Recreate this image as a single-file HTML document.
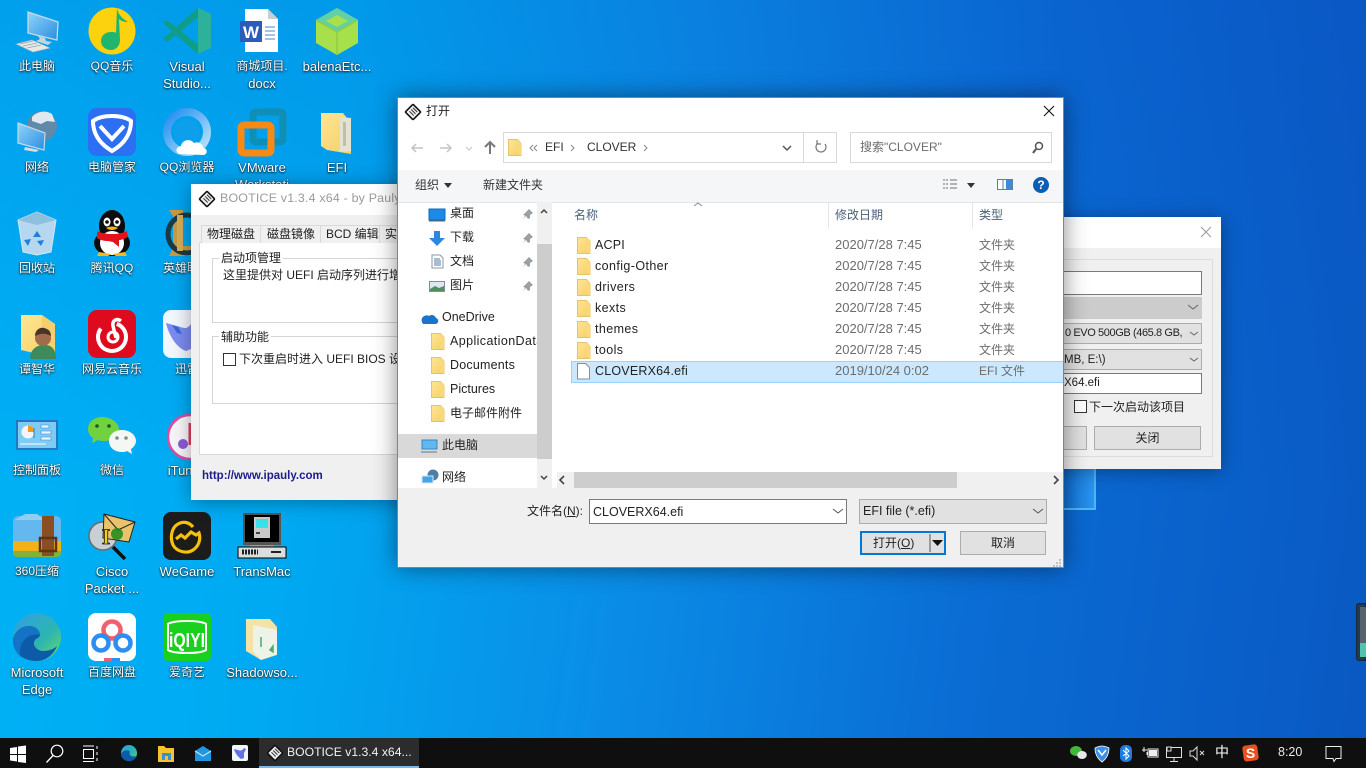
<!DOCTYPE html>
<html><head><meta charset="utf-8"><title>BOOTICE</title>
<style>
*{box-sizing:border-box}
html,body{margin:0;padding:0;width:1366px;height:768px;overflow:hidden}
body{position:relative;font-family:"Liberation Sans","Noto Sans CJK SC",sans-serif;font-size:12px;color:#222;
background:linear-gradient(to bottom,rgba(8,50,180,.14),rgba(8,50,180,0) 65%),linear-gradient(98deg,#00b2f6 0%,#00aaf2 24%,#0a8ce6 48%,#0a6cd4 72%,#0a58c2 100%)}
div{position:absolute}
.t{white-space:nowrap;line-height:16px;height:16px}
.l{width:80px;margin-left:-40px;text-align:center;color:#fff;line-height:17px;white-space:nowrap;text-shadow:0 1px 2px rgba(0,0,0,.9),0 0 1px rgba(0,0,0,.7);font-size:12px}
.e{font-size:13px}
.w{background:#f0f0f0;box-shadow:0 2px 18px rgba(0,0,0,.35)}
.b{border:1px solid #adadad;background:#e1e1e1}
.i{border:1px solid #7a7a7a;background:#fff}
.g{color:#6d6d6d;font-size:13px}
.k{color:#6d6d6d}
.n{font-size:12.5px;color:#222;letter-spacing:.2px}
.h{color:#4c607a}
svg{position:absolute;left:0;top:0;overflow:visible}
</style></head><body>

<div style="left:1064px;top:468px;width:32px;height:42px;background:linear-gradient(90deg,#0f6fd6,#2a96ee);border-right:2px solid #4fb6f4;border-bottom:2px solid #4fb6f4"></div>
<div style="left:1356px;top:603px;width:10px;height:58px;background:#26384e;border:1px solid #16283c;border-radius:3px 0 0 3px"></div>
<div style="left:1360px;top:607px;width:6px;height:36px;background:#56636f"></div>
<div style="left:1360px;top:643px;width:6px;height:14px;background:#4fc4b0"></div>

<svg width="1366" height="768" viewBox="0 0 1366 768">
<defs>
<linearGradient id="sc" x1="0" y1="0" x2="1" y2="1"><stop offset="0" stop-color="#8fd6fa"/><stop offset="1" stop-color="#2c8ce0"/></linearGradient>
<linearGradient id="fo" x1="0" y1="0" x2="1" y2="1"><stop offset="0" stop-color="#ffe593"/><stop offset="1" stop-color="#f5cf66"/></linearGradient>
<linearGradient id="ed" x1="0" y1="0" x2="1" y2="1"><stop offset="0" stop-color="#2f9fe6"/><stop offset=".6" stop-color="#2cb6b0"/><stop offset="1" stop-color="#6edc62"/></linearGradient>
<linearGradient id="qb" x1="0" y1="0" x2="1" y2="1"><stop offset="0" stop-color="#1f8cf0"/><stop offset="1" stop-color="#bfe6fb"/></linearGradient>
<symbol id="f" viewBox="0 0 14 17" overflow="visible"><path d="M.5.5h9l3.5 4v12H.5z" fill="url(#fo)" stroke="#e3c46c"/><path d="M9.500.5l3.500 4v12l-3.500-2z" fill="#f9d97c"/></symbol>
<symbol id="bi" viewBox="0 0 16 16" overflow="visible"><g transform="rotate(45 8 8)"><rect x="2.500" y="2.500" width="11" height="11" rx="1" fill="#eee" stroke="#111" stroke-width="1.600"/><path d="M5 5h6M5 7.500h6M5 10h6" stroke="#333"/></g></symbol>
</defs>

<!-- row 1 -->
<path d="M28 12L58 22 57 40 28 33z" fill="url(#sc)" stroke="#c9d8e4" stroke-width="1.300"/>
<path d="M38 36l7 2 1 3 6 1-4 3-12-4 4-2z" fill="#c5d4df"/>
<path d="M16 44l16-4 18 8-17 4z" fill="#e4e8ea" stroke="#a8b4bc" stroke-width=".6"/>
<path d="M20 44l13-3M23 46l14-3M27 48l14-3" stroke="#9aa6ae" stroke-width=".8"/>

<circle cx="112" cy="31" r="23.500" fill="#fcd20e"/>
<path d="M117 8c1 7 6 11 11 14-4 0-7-1-9-3l1 21c0 6-4 10-9 10-6 0-10-4-10-9s4-9 10-9c2 0 4 0 5 1z" fill="#1fb56e"/>

<path d="M198 8l13 6v34l-13 6z" fill="#2cb29a"/>
<path d="M198 8L176 27l-9-7-4 3 9 8-9 8 4 3 9-7 22 19V45L181 31l17-14z" fill="#0e9d88"/>

<path d="M245 9h23l10 10v33h-33z" fill="#fff"/><path d="M268 9v10h10z" fill="#c9ced4"/>
<rect x="240" y="21" width="22" height="21" fill="#2b5cb8"/>
<text x="251" y="38" fill="#fff" font-size="17" font-weight="bold" text-anchor="middle" font-family="Liberation Sans">W</text>
<path d="M265 27h10M265 31h10M265 35h10M265 39h10" stroke="#4a86d0"/>

<path d="M337 8l21 12v23l-21 12-21-12V20z" fill="#a8e04c"/>
<path d="M337 8l21 12-21 12-21-12z" fill="#62cfa4"/>
<path d="M337 15l11 6-11 6-11-6z" fill="#a8e04c"/>
<path d="M337 32v23M316 20l21 12 21-12" stroke="#8fcc44" stroke-width="1.500" fill="none"/>

<!-- row 2 -->
<circle cx="42" cy="126" r="15" fill="#5f8aaa"/><path d="M32 117c5-6 14-7 20-3l3 8-8-1-6 3-9-3z" fill="#dfe9ef"/>
<path d="M18 123l27 10-1 17-26-7z" fill="url(#sc)" stroke="#c9d8e4" stroke-width="1.200"/>
<path d="M25 147l14 3-3 2-12-2z" fill="#d5dde2"/>

<rect x="88" y="108" width="48" height="48" rx="9" fill="#2c6ff2"/>
<path d="M112 116c8 0 15 2 19 5 0 13-7 23-19 30-12-7-19-17-19-30 4-3 11-5 19-5z" fill="none" stroke="#fff" stroke-width="4"/>
<path d="M100 126l12 13 12-13" fill="none" stroke="#fff" stroke-width="4"/>

<circle cx="187" cy="132" r="20" fill="none" stroke="url(#qb)" stroke-width="8"/>
<circle cx="187" cy="132" r="13" fill="#0e9fec"/>
<path d="M178 154c-6 0-6-7 0-8 1-6 9-8 13-3 5-2 9 1 9 5 5 0 5 7 0 7z" fill="#fff" transform="translate(3 0)"/>

<rect x="253" y="112" width="30" height="30" fill="none" stroke="#128cab" stroke-width="7" rx="3" opacity=".85"/>
<rect x="241" y="125" width="30" height="28" fill="none" stroke="#f78a14" stroke-width="7" rx="3"/>

<path d="M321 113h22l8 10v31l-24-4-6-4z" fill="url(#fo)"/><path d="M340 117l11 1v33l-11 1z" fill="#e4e2d2"/><path d="M343 122h3v24h-3z" fill="#c0bfa8"/>

<!-- row 3 -->
<path d="M18 220l19-8 19 8-5 32-14 3-14-3z" fill="#c9def0" opacity=".9" stroke="#e6f1f8"/>
<path d="M18 220l19-8 19 8-19 5z" fill="#8ec0de"/>
<path d="M37 231l4 6h-8zM44 240l-3 6-4-5zM28 246l-4-6 7-1z" fill="#1f7fda"/>

<ellipse cx="112" cy="226" rx="13" ry="16" fill="#0c0c0c"/>
<ellipse cx="112" cy="243" rx="18" ry="13" fill="#0c0c0c"/>
<ellipse cx="112" cy="243" rx="12" ry="12" fill="#fff"/>
<path d="M97 231c8 4 22 4 30 0l1 6c-4 2-7 3-9 3v7l-6-5-5-1c-4 0-8-1-11-3z" fill="#e1141c"/>
<ellipse cx="107" cy="222" rx="3.500" ry="4.500" fill="#fff"/><ellipse cx="117" cy="222" rx="3.500" ry="4.500" fill="#fff"/>
<circle cx="107" cy="222" r="1.800" fill="#000"/><circle cx="117" cy="222" r="1.800" fill="#000"/>
<path d="M106 228q6-3 12 0-6 4-12 0z" fill="#f6b916"/>
<path d="M99 252l12 2-3 2H97zM125 252l-12 2 3 2h11z" fill="#f6b916"/>

<path d="M169 210h14v6h-3v30h11v10h-22l4-8v-32z" fill="#c79b45"/>
<circle cx="187" cy="234" r="19" fill="none" stroke="#1c3a44" stroke-width="5"/>
<rect x="177" y="215" width="6" height="36" fill="#d7ad57"/>

<!-- row 4 -->
<path d="M21 315h21l13 9v34l-34-8z" fill="url(#fo)"/><path d="M42 315l13 9v20H42z" fill="#f5cf6e"/>
<path d="M30 359c0-10 7-13 11-14h6c5 1 9 5 9 14z" fill="#3e8a5b"/><circle cx="43" cy="338" r="8" fill="#a06c4c"/><path d="M35 336c0-6 5-9 9-8 5 1 7 4 7 8-5-3-10-3-16 0z" fill="#4a3428"/>

<rect x="88" y="310" width="48" height="48" rx="9" fill="#de0b1e"/>
<circle cx="112" cy="337" r="14" fill="none" stroke="#fff" stroke-width="4" stroke-dasharray="70 18" transform="rotate(-70 112 337)"/>
<circle cx="113" cy="337" r="5" fill="none" stroke="#fff" stroke-width="3"/>
<path d="M121 321c-4-3-9-1-8 5l3 12" fill="none" stroke="#fff" stroke-width="3.500"/>

<rect x="163" y="310" width="48" height="48" rx="8" fill="#f2f6fd"/>
<path d="M166 323l11 3c5 1 9 5 14-2v25l-5 2c-9-3-17-15-20-28z" fill="#7b8bf0"/>
<path d="M172 325l6 2 4 7-5-1z" fill="#3a66d8"/>

<!-- row 5 -->
<rect x="16" y="420" width="42" height="30" fill="#2477c4"/><rect x="18" y="422" width="38" height="26" fill="#7ecbf5"/>
<circle cx="28" cy="432" r="6.500" fill="#f2f6fa"/><path d="M28 432v-6.500a6.500 6.500 0 0 1 6.500 6.500z" fill="#f49a1e"/>
<path d="M41 425h8v3h-8zM41 431h10v3h-10zM41 437h10v3h-10z" fill="#eaf5fc" stroke="#3c86c8" stroke-width=".6"/>
<path d="M20 444h26" stroke="#fff"/><path d="M34 428v10" stroke="#2a7cc8"/>

<path d="M102 417c-9 0-14 6-14 12 0 4 2 7 5 9l-1 5 6-3c2 1 5 1 7 1 9 0 14-6 14-12s-8-12-17-12z" fill="#6fd23e"/>
<circle cx="97" cy="426" r="1.800" fill="#1c5b14"/><circle cx="109" cy="426" r="1.800" fill="#1c5b14"/>
<path d="M122 430c-8 0-13 5-13 11s5 11 13 11c2 0 3 0 5-1l5 3-1-5c3-2 5-5 5-8 0-6-6-11-14-11z" fill="#f5f7f5"/>
<circle cx="117" cy="438" r="1.800" fill="#8a8a8a"/><circle cx="126" cy="438" r="1.800" fill="#8a8a8a"/>

<circle cx="190" cy="437" r="22" fill="#f7f5f7" stroke="#d84fa0" stroke-width="2.500"/>
<path d="M190 423v22" stroke="#e33d5e" stroke-width="3"/><circle cx="183" cy="444" r="5" fill="#8a5bd8"/>

<!-- row 6 -->
<rect x="13" y="516" width="48" height="32" rx="5" fill="#65b7ef"/>
<path d="M15 520l10-6h12l8 6z" fill="#8fcff5"/>
<path d="M13 541h48v9c0 4-2 6-5 6H18c-3 0-5-2-5-6z" fill="#f3b117"/><path d="M13 551h48v2c0 3-2 4-5 4H18c-3 0-5-1-5-4z" fill="#7fb33b"/>
<rect x="42" y="516" width="12" height="40" fill="#8a4e22"/><rect x="40" y="538" width="16" height="13" fill="none" stroke="#5d3414" stroke-width="2.500"/>

<circle cx="103" cy="536" r="14" fill="#c9d0d3" stroke="#6b6b6b" stroke-width="1.500"/>
<path d="M113 547l12 12" stroke="#111" stroke-width="3.500"/>
<path d="M104 514l31 8-6 20-26-4z" fill="#e9c26c" stroke="#222"/><path d="M104 514l14 16 17-8" fill="none" stroke="#222"/>
<text x="106" y="544" font-size="22" font-weight="bold" fill="#f6d10e" stroke="#111" stroke-width=".8" text-anchor="middle" font-family="Liberation Serif">I</text>
<circle cx="117" cy="534" r="6" fill="#1a8a1a" opacity=".85"/>

<rect x="163" y="512" width="48" height="48" rx="8" fill="#1d1c1c"/>
<path d="M193 527c-4-5-10-6-15-3-7 4-8 14-5 21 4 7 14 9 20 5 6-4 8-11 6-17l-3 2-5-3-6 6-4-3-5 4" fill="none" stroke="#f6c00e" stroke-width="3.200"/>

<rect x="243" y="513" width="38" height="32" fill="#555"/><rect x="245" y="515" width="34" height="27" fill="#000"/>
<rect x="254" y="517" width="16" height="21" fill="#c9c9c9"/><rect x="256" y="519" width="12" height="9" fill="#38e2ea"/><rect x="256" y="532" width="4" height="2" fill="#444"/>
<rect x="250" y="545" width="24" height="3" fill="#9a9a9a"/>
<rect x="238" y="547" width="48" height="11" fill="#ddd" stroke="#000"/>
<path d="M242 552h16" stroke="#222" stroke-width="5" stroke-dasharray="2 1"/><path d="M271 552h10" stroke="#222" stroke-width="2"/>

<!-- row 7 -->
<circle cx="37" cy="637" r="24" fill="url(#ed)"/>
<path d="M13 640c1-8 8-14 16-14 7 0 11 5 11 9-1 4-5 3-6 7-1 5 4 9 9 9 6 0 11-2 14-5-4 10-12 15-21 15-14 0-23-10-23-21z" fill="#0d5aa8"/>
<path d="M13 640c1-8 8-14 16-14 7 0 11 5 11 9-8-2-16 2-19 11-2 4-1 9 1 12-6-5-9-11-9-18z" fill="#1473c4"/>

<rect x="88" y="613" width="48" height="48" rx="8" fill="#fff"/>
<circle cx="112" cy="630" r="8.500" fill="none" stroke="#f25f6e" stroke-width="4.500"/>
<circle cx="101" cy="643" r="7.500" fill="none" stroke="#2b8ef2" stroke-width="4.500"/><circle cx="123" cy="643" r="7.500" fill="none" stroke="#2b8ef2" stroke-width="4.500"/>
<rect x="104" y="658" width="8" height="3" fill="#f25f6e"/><rect x="112" y="658" width="8" height="3" fill="#2b8ef2"/>

<rect x="163" y="613" width="48" height="48" rx="5" fill="#1ad01e"/>
<path d="M168 624c6-4 32-4 38 0v26c-6 4-32 4-38 0z" fill="none" stroke="#fff" stroke-width="2"/>
<text x="187" y="647" font-size="20" font-weight="bold" fill="#fff" text-anchor="middle" font-family="Liberation Sans" textLength="36" lengthAdjust="spacingAndGlyphs">iQIYI</text>

<path d="M246 619h24l7 8v28l-16 5-15-9z" fill="#f5e2a6"/><path d="M253 625l24 5v24l-16 6-8-9z" fill="#eef3ea"/>
<path d="M261 637v10M270 650l3-4v6z" stroke="#45b068" fill="#45b068" stroke-width="1.500"/>
</svg>

<div class="l" style="left:37px;top:58px">此电脑</div>
<div class="l" style="left:112px;top:58px">QQ音乐</div>
<div class="l e" style="left:187px;top:58px">Visual<br>Studio...</div>
<div class="l" style="left:262px;top:58px">商城项目.<br><span class="e">docx</span></div>
<div class="l e" style="left:337px;top:58px">balenaEtc...</div>
<div class="l" style="left:37px;top:159px">网络</div>
<div class="l" style="left:112px;top:159px">电脑管家</div>
<div class="l" style="left:187px;top:159px">QQ浏览器</div>
<div class="l e" style="left:262px;top:159px">VMware<br>Workstati</div>
<div class="l e" style="left:337px;top:159px">EFI</div>
<div class="l" style="left:37px;top:260px">回收站</div>
<div class="l" style="left:112px;top:260px">腾讯QQ</div>
<div class="l" style="left:187px;top:260px">英雄联盟</div>
<div class="l" style="left:37px;top:361px">谭智华</div>
<div class="l" style="left:112px;top:361px">网易云音乐</div>
<div class="l" style="left:187px;top:361px">迅雷</div>
<div class="l" style="left:37px;top:462px">控制面板</div>
<div class="l" style="left:112px;top:462px">微信</div>
<div class="l e" style="left:187px;top:462px">iTunes</div>
<div class="l" style="left:37px;top:563px">360压缩</div>
<div class="l e" style="left:112px;top:563px">Cisco<br>Packet ...</div>
<div class="l e" style="left:187px;top:563px">WeGame</div>
<div class="l e" style="left:262px;top:563px">TransMac</div>
<div class="l e" style="left:37px;top:664px">Microsoft<br>Edge</div>
<div class="l" style="left:112px;top:664px">百度网盘</div>
<div class="l" style="left:187px;top:664px">爱奇艺</div>
<div class="l e" style="left:262px;top:664px">Shadowso...</div>

<!-- right background dialog -->
<div class="w" style="left:900px;top:217px;width:321px;height:252px"></div>
<div style="left:900px;top:217px;width:321px;height:31px;background:#fff"></div>
<svg width="1366" height="768"><path d="M1201 227l10 10M1211 227l-10 10" stroke="#999" fill="none"/></svg>
<div style="left:920px;top:259px;width:293px;height:198px;border:1px solid #dcdcdc"></div>
<div class="i" style="left:940px;top:271px;width:262px;height:24px"></div>
<div style="left:940px;top:297px;width:262px;height:22px;background:#ccc;border:1px solid #ccc"></div>
<div class="b" style="left:940px;top:323px;width:262px;height:21px"></div>
<div class="t" style="left:1065px;top:325px;font-size:11px;letter-spacing:-.4px">0 EVO 500GB (465.8 GB,</div>
<div class="b" style="left:940px;top:349px;width:262px;height:21px"></div>
<div class="t" style="left:1064px;top:352px;font-size:11.5px">MB, E:\)</div>
<div class="i" style="left:940px;top:373px;width:262px;height:21px"></div>
<div class="t" style="left:1064px;top:375px;font-size:11.5px">X64.efi</div>
<svg width="1366" height="768"><path d="M1188 305l5 4 5-4M1190 332l4 3 4-3M1190 358l4 3 4-3" stroke="#666" fill="none"/></svg>
<div style="left:1074px;top:400px;width:13px;height:13px;border:1px solid #333;background:#fff"></div>
<div class="t" style="left:1089px;top:399px">下一次启动该项目</div>
<div class="b" style="left:986px;top:426px;width:101px;height:24px"></div>
<div class="b" style="left:1094px;top:426px;width:107px;height:24px;text-align:center;line-height:22px">关闭</div>

<!-- BOOTICE -->
<div class="w" style="left:191px;top:184px;width:300px;height:316px"></div>
<div style="left:191px;top:184px;width:300px;height:31px;background:#fff"></div>
<svg width="1366" height="768"><use href="#bi" x="199" y="191" width="16" height="16"/></svg>
<div class="t" style="left:220px;top:190px;color:#9a9a9a;font-size:12.4px;letter-spacing:.2px">BOOTICE v1.3.4 x64 - by Pauly</div>
<div style="left:199px;top:242px;width:290px;height:213px;background:#fff;border:1px solid #d9d9d9"></div>
<div style="left:201px;top:225px;width:60px;height:18px;background:#f0f0f0;border:1px solid #d9d9d9;border-bottom:0"></div>
<div style="left:260px;top:225px;width:61px;height:18px;background:#f0f0f0;border:1px solid #d9d9d9;border-bottom:0"></div>
<div style="left:320px;top:225px;width:60px;height:18px;background:#f0f0f0;border:1px solid #d9d9d9;border-bottom:0"></div>
<div style="left:379px;top:225px;width:60px;height:18px;background:#f0f0f0;border:1px solid #d9d9d9;border-bottom:0"></div>
<div class="t" style="left:207px;top:226px">物理磁盘</div>
<div class="t" style="left:267px;top:226px">磁盘镜像</div>
<div class="t" style="left:326px;top:226px">BCD 编辑</div>
<div class="t" style="left:385px;top:226px">实</div>
<div style="left:212px;top:258px;width:270px;height:65px;border:1px solid #d5d5d5"></div>
<div class="t" style="left:219px;top:250px;background:#fff;padding:0 2px">启动项管理</div>
<div class="t" style="left:223px;top:267px">这里提供对 UEFI 启动序列进行增删改</div>
<div style="left:212px;top:336px;width:270px;height:68px;border:1px solid #d5d5d5"></div>
<div class="t" style="left:219px;top:329px;background:#fff;padding:0 2px">辅助功能</div>
<div style="left:223px;top:353px;width:13px;height:13px;border:1px solid #333;background:#fff"></div>
<div class="t" style="left:239px;top:351px">下次重启时进入 UEFI BIOS 设置</div>
<div class="t" style="left:202px;top:468px;color:#1c1c8a;font-weight:bold;font-size:11.5px">http://www.ipauly.com</div>

<!-- Open dialog -->
<div class="w" style="left:397px;top:97px;width:667px;height:471px;background:#f0f0f0;box-shadow:0 0 22px rgba(0,0,0,.45);outline:1px solid rgba(10,50,110,.55);outline-offset:-1px"></div>
<div style="left:398px;top:98px;width:665px;height:104px;background:#fff"></div>
<div style="left:398px;top:170px;width:665px;height:32px;background:#f5f6f7"></div>
<div style="left:398px;top:202px;width:665px;height:286px;background:#fff;border-top:1px solid #e5e5e5"></div>
<svg width="1366" height="768"><use href="#bi" x="405" y="104" width="16" height="16"/></svg>
<div class="t" style="left:426px;top:103px">打开</div>

<div style="left:503px;top:132px;width:334px;height:31px;border:1px solid #d9d9d9;background:#fff"></div>
<div style="left:803px;top:132px;width:1px;height:31px;background:#d9d9d9"></div>
<div style="left:850px;top:132px;width:202px;height:31px;border:1px solid #d9d9d9;background:#fff"></div>
<div class="t" style="left:545px;top:139px;color:#333">EFI</div>
<div class="t" style="left:587px;top:139px;color:#333">CLOVER</div>
<div class="t" style="left:860px;top:139px;color:#6d6d6d">搜索"CLOVER"</div>
<svg width="1366" height="768" fill="none">
<path d="M423 148h-11m4-4l-4 4 4 4" stroke="#c4c4c4" stroke-width="1.500"/>
<path d="M440 148h11m-4-4l4 4-4 4" stroke="#c4c4c4" stroke-width="1.500"/>
<path d="M466 147l3 3 3-3" stroke="#c4c4c4"/>
<path d="M490 154v-12m-5 5l5-5 5 5" stroke="#777" stroke-width="2"/>
<use href="#f" x="508" y="139" width="14" height="17"/>
<path d="M533 145l-3 3 3 3M537 145l-3 3 3 3M571 145l3 3-3 3M644 145l3 3-3 3" stroke="#888"/>
<path d="M783 146l4 4 4-4" stroke="#555" stroke-width="1.500"/>
<path d="M825 144a5 5 0 1 1-7-1M817 140v4h4" stroke="#777" stroke-width="1.200"/>
<circle cx="1039" cy="146" r="3.500" stroke="#555" stroke-width="1.500"/><path d="M1036 149l-3 4" stroke="#555" stroke-width="2"/>
<path d="M944 179v2M944 183v2M944 187v2M947 179v2M947 183v2M947 187v2M950 180h7M950 184h7M950 188h7" stroke="#6f6f6f"/>
<rect x="997.500" y="179.500" width="15" height="10" stroke="#5d7fa0" fill="#fff"/><rect x="1006" y="180" width="6" height="9" fill="#3c8ad8"/><path d="M1003 180v9" stroke="#5d7fa0"/>
<path d="M444 183h8l-4 5zM967 183h8l-4 5z" fill="#333"/>
<circle cx="1041" cy="185" r="8" fill="#0a5fb5"/>
<path d="M1044 106l10 10M1054 106l-10 10" stroke="#111" stroke-width="1.100"/>
<path d="M694 206l4-3 4 3" stroke="#888"/>
</svg>
<div class="t" style="left:1036px;top:177px;width:10px;color:#fff;font-weight:bold;font-size:12px;text-align:center">?</div>
<div class="t" style="left:415px;top:177px;color:#333">组织</div>
<div class="t" style="left:483px;top:177px;color:#333">新建文件夹</div>

<!-- nav -->
<div style="left:398px;top:434px;width:139px;height:24px;background:#d9d9d9"></div>
<div style="left:537px;top:202px;width:15px;height:286px;background:#f0f0f0"></div>
<div style="left:537px;top:244px;width:15px;height:215px;background:#cdcdcd"></div>
<svg width="1366" height="768" fill="none">
<path d="M541 213l3-3 3 3M541 476l3 3 3-3" stroke="#444" stroke-width="1.500"/>
<rect x="429" y="209" width="16" height="11" fill="#1c8ae6" stroke="#0b6cc0"/><path d="M429 221h16" stroke="#666"/>
<path d="M434 231h6v7h5l-8 8-8-8h5z" fill="#2f86e0"/>
<path d="M432 255h8l3 3v10h-11z" fill="#fff" stroke="#8a97a3"/><path d="M434 259h6M434 261h7M434 263h7M434 265h7" stroke="#4a7ca8"/>
<rect x="429.500" y="281.500" width="15" height="10" fill="#dfe8ee" stroke="#7f8e9a"/><path d="M430 289l5-3 4 2 5-2v5h-14z" fill="#4f8f62"/>
<path d="M524 214l5-5 4 4-3 2v3l-2 1-2-3-3 3 2-3-2-2z M524 238l5-5 4 4-3 2v3l-2 1-2-3-3 3 2-3-2-2zM524 262l5-5 4 4-3 2v3l-2 1-2-3-3 3 2-3-2-2zM524 286l5-5 4 4-3 2v3l-2 1-2-3-3 3 2-3-2-2z" fill="#9aa0a6"/>
<path d="M422 322c-2-5 4-8 7-6 2-2 6-1 7 2 3 1 3 5 0 6h-12c-1 0-2-1-2-2z" fill="#1b74c8"/>
<use href="#f" x="431" y="333" width="14" height="17"/><use href="#f" x="431" y="357" width="14" height="17"/>
<use href="#f" x="431" y="381" width="14" height="17"/><use href="#f" x="431" y="405" width="14" height="17"/>
<rect x="422" y="440" width="15" height="9" fill="#5fb8f0" stroke="#3b86c4"/><path d="M421 452h16" stroke="#8a97a3" stroke-width="1.500"/>
<circle cx="433" cy="475" r="5.500" fill="#4d7ea6"/><rect x="422" y="476" width="11" height="7" fill="#3fa6ec" stroke="#d8e6f0"/>
</svg>
<div class="t" style="left:450px;top:205px">桌面</div>
<div class="t" style="left:450px;top:229px">下载</div>
<div class="t" style="left:450px;top:253px">文档</div>
<div class="t" style="left:450px;top:277px">图片</div>
<div class="t" style="left:442px;top:309px;font-size:12.5px">OneDrive</div>
<div class="t" style="left:450px;top:333px;width:87px;overflow:hidden;font-size:12.5px;letter-spacing:.4px">ApplicationData</div>
<div class="t" style="left:450px;top:357px;font-size:12.5px;letter-spacing:.2px">Documents</div>
<div class="t" style="left:450px;top:381px;font-size:12.5px">Pictures</div>
<div class="t" style="left:450px;top:405px">电子邮件附件</div>
<div class="t" style="left:442px;top:437px">此电脑</div>
<div class="t" style="left:442px;top:469px">网络</div>

<!-- list -->
<div style="left:828px;top:203px;width:1px;height:25px;background:#e5e5e5"></div>
<div style="left:972px;top:203px;width:1px;height:25px;background:#e5e5e5"></div>
<div class="t h" style="left:574px;top:207px">名称</div>
<div class="t h" style="left:835px;top:207px">修改日期</div>
<div class="t h" style="left:979px;top:207px">类型</div>
<div style="left:571px;top:361px;width:492px;height:22px;background:#cce8ff;border:1px solid #99d1ff;border-right:0"></div>
<svg width="1366" height="768">
<use href="#f" x="577" y="237" width="14" height="17"/><use href="#f" x="577" y="258" width="14" height="17"/>
<use href="#f" x="577" y="279" width="14" height="17"/><use href="#f" x="577" y="300" width="14" height="17"/>
<use href="#f" x="577" y="321" width="14" height="17"/><use href="#f" x="577" y="342" width="14" height="17"/>
<path d="M577.500 363.500h8l4 4v11.500h-12z" fill="#fff" stroke="#8a8f96"/>
</svg>
<div class="t n" style="left:595px;top:237px">ACPI</div>
<div class="t n" style="left:595px;top:258px;letter-spacing:.4px">config-Other</div>
<div class="t n" style="left:595px;top:279px;letter-spacing:.4px">drivers</div>
<div class="t n" style="left:595px;top:300px;letter-spacing:.4px">kexts</div>
<div class="t n" style="left:595px;top:321px;letter-spacing:.4px">themes</div>
<div class="t n" style="left:595px;top:342px;letter-spacing:.4px">tools</div>
<div class="t n" style="left:595px;top:363px">CLOVERX64.efi</div>
<div class="t g" style="left:835px;top:237px">2020/7/28 7:45</div>
<div class="t g" style="left:835px;top:258px">2020/7/28 7:45</div>
<div class="t g" style="left:835px;top:279px">2020/7/28 7:45</div>
<div class="t g" style="left:835px;top:300px">2020/7/28 7:45</div>
<div class="t g" style="left:835px;top:321px">2020/7/28 7:45</div>
<div class="t g" style="left:835px;top:342px">2020/7/28 7:45</div>
<div class="t g" style="left:835px;top:363px">2019/10/24 0:02</div>
<div class="t k" style="left:979px;top:237px">文件夹</div>
<div class="t k" style="left:979px;top:258px">文件夹</div>
<div class="t k" style="left:979px;top:279px">文件夹</div>
<div class="t k" style="left:979px;top:300px">文件夹</div>
<div class="t k" style="left:979px;top:321px">文件夹</div>
<div class="t k" style="left:979px;top:342px">文件夹</div>
<div class="t k" style="left:979px;top:363px">EFI 文件</div>

<div style="left:557px;top:472px;width:506px;height:16px;background:#f0f0f0"></div>
<div style="left:574px;top:472px;width:383px;height:16px;background:#cdcdcd"></div>
<div style="left:398px;top:488px;width:665px;height:79px;background:#f0f0f0"></div>

<div class="t" style="left:527px;top:503px">文件名(<u>N</u>):</div>
<div class="i" style="left:589px;top:499px;width:258px;height:25px"></div>
<div class="t" style="left:593px;top:504px;font-size:12.5px">CLOVERX64.efi</div>
<div class="b" style="left:859px;top:499px;width:188px;height:25px"></div>
<div class="t" style="left:863px;top:503px;font-size:12.5px">EFI file (*.efi)</div>
<div style="left:860px;top:531px;width:86px;height:24px;background:#e1e1e1;border:2px solid #0078d7"></div>
<div class="t" style="left:873px;top:535px">打开(<u>O</u>)</div>
<div class="b" style="left:960px;top:531px;width:86px;height:24px;text-align:center;line-height:22px">取消</div>
<svg width="1366" height="768" fill="none">
<path d="M833 509l5 4 5-4M1033 509l5 4 5-4" stroke="#555"/>
<path d="M930 534v18" stroke="#555"/><path d="M932 540h11l-5.500 6z" fill="#111"/>
<path d="M564 476l-4 4 4 4M1054 476l4 4-4 4" stroke="#444" stroke-width="1.600"/>
<path d="M1059 560h2M1056 563h2M1059 563h2M1053 566h2M1056 566h2M1059 566h2" stroke="#b5b5b5" stroke-width="1.500"/>
</svg>

<!-- taskbar -->
<div style="left:0;top:738px;width:1366px;height:30px;background:#0f0f0f"></div>
<div style="left:259px;top:738px;width:160px;height:30px;background:#2c2c2c"></div>
<div style="left:259px;top:766px;width:160px;height:2px;background:#76b9ed"></div>
<div class="t" style="left:287px;top:744px;color:#f2f2f2;font-size:12.2px">BOOTICE v1.3.4 x64...</div>
<div class="t" style="left:1278px;top:744px;color:#e8e8e8;font-size:12.5px">8:20</div>
<div class="t" style="left:1215px;top:744px;color:#fff;font-size:14px">中</div>
<svg width="1366" height="768" fill="none">
<path d="M10 748l7-1v7h-7zM18 746.500l8-1v8.500h-8zM10 755h7v6.500l-7-1zM18 755h8v8l-8-1z" fill="#fff"/>
<circle cx="57" cy="751" r="5.800" stroke="#fff" stroke-width="1.200"/><path d="M53 755.500l-6.500 7" stroke="#fff" stroke-width="1.300"/>
<rect x="83.500" y="749.500" width="10" height="9" stroke="#fff"/><path d="M83 746h11M83 761.500h11M97 746v3M97 752v3M97 758v3" stroke="#fff"/>
<circle cx="129" cy="753" r="8" fill="url(#ed)"/><path d="M121 754c2-4 8-5 9-2-2 2 1 6 7 4-2 4-6 6-10 5-4-1-6-4-6-7z" fill="#0d5aa8"/>
<path d="M158 746h6l2 2h8v14h-16z" fill="#f5c330"/><rect x="162" y="753" width="9" height="7" fill="#3a8fd0"/><rect x="165" y="756" width="3" height="4" fill="#f5c330"/>
<path d="M195 751l8-5 8 5v10h-16z" fill="#1e97e0"/><path d="M195 751l8 5 8-5" stroke="#bfe4f8" stroke-width="1.200"/>
<rect x="232" y="745" width="16" height="16" rx="2" fill="#f2f6fd"/><path d="M234 749l4 1c2 1 4 1 6-2l2 1-2 4v5l-3 1c-3-2-6-6-7-10z" fill="#6272e4"/>
<use href="#bi" x="267" y="745" width="16" height="16"/>
<ellipse cx="1076" cy="751" rx="6" ry="5" fill="#3fb83c"/><ellipse cx="1082" cy="755" rx="4.800" ry="4" fill="#e8e8e8"/>
<path d="M1102 746c3 0 5 1 7 2 0 6-3 11-7 14-4-3-7-8-7-14 2-1 4-2 7-2z" fill="#3a8fe6" stroke="#fff" stroke-width=".8"/><path d="M1098 750l4 5 4-5" stroke="#fff" stroke-width="1.500"/>
<rect x="1120" y="745" width="12" height="17" rx="5" fill="#1e7ce0"/><path d="M1123 750l6 6-3 3v-11l3 3-6 5" stroke="#fff"/>
<rect x="1148" y="749" width="10" height="8" stroke="#eee"/><rect x="1149" y="750" width="8" height="6" fill="#eee"/><path d="M1142 750h5M1144 747v5M1147 752v3" stroke="#eee"/>
<rect x="1166.500" y="747.500" width="15" height="10" stroke="#ddd"/><path d="M1174 758v3M1170 761.500h8" stroke="#ddd"/><rect x="1167" y="747" width="4" height="4" fill="#0f0f0f" stroke="#ddd"/>
<path d="M1190 751h3l4-4v13l-4-4h-3zM1200 751l4 4M1204 751l-4 4" stroke="#ddd"/>
<rect x="1243" y="745" width="15" height="16" rx="3" fill="#e8501e" transform="rotate(-8 1250 753)"/>
<text x="1250.500" y="758" font-size="14" font-weight="bold" fill="#fff" text-anchor="middle" font-family="Liberation Sans">S</text>
<path d="M1326 746.500h15v12h-5l-2 3-1-3h-7z" stroke="#eee"/>
</svg>
</body></html>
